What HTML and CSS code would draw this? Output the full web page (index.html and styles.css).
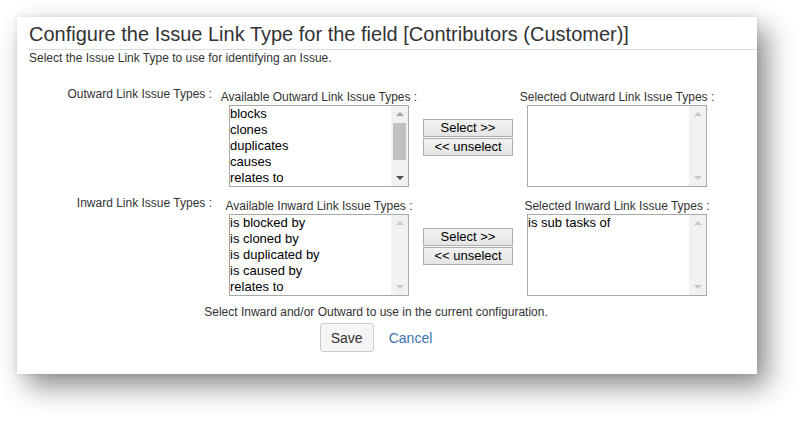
FILE: index.html
```html
<!DOCTYPE html>
<html>
<head>
<meta charset="utf-8">
<link rel="stylesheet" href="styles.css">
</head>
<body>
<div class="card">
  <h1 class="title">Configure the Issue Link Type for the field [Contributors (Customer)]</h1>
  <p class="intro">Select the Issue Link Type to use for identifying an Issue.</p>
  <div class="form">
    <div class="row">
      <div class="row-label">Outward Link Issue Types :</div>
      <div class="col">
        <div class="col-label">Available Outward Link Issue Types :</div>
        <div class="listbox">
          <div class="items">
            <div>blocks</div><div>clones</div><div>duplicates</div><div>causes</div><div>relates to</div>
          </div>
          <div class="sb active">
            <span class="arr up"></span>
            <span class="track"><span class="thumb"></span></span>
            <span class="arr down"></span>
          </div>
        </div>
      </div>
      <div class="btns">
        <button class="mv">Select &gt;&gt;</button>
        <button class="mv">&lt;&lt; unselect</button>
      </div>
      <div class="col">
        <div class="col-label">Selected Outward Link Issue Types :</div>
        <div class="listbox">
          <div class="items"></div>
          <div class="sb">
            <span class="arr up"></span>
            <span class="track"></span>
            <span class="arr down"></span>
          </div>
        </div>
      </div>
    </div>
    <div class="row">
      <div class="row-label">Inward Link Issue Types :</div>
      <div class="col">
        <div class="col-label">Available Inward Link Issue Types :</div>
        <div class="listbox">
          <div class="items">
            <div>is blocked by</div><div>is cloned by</div><div>is duplicated by</div><div>is caused by</div><div>relates to</div>
          </div>
          <div class="sb">
            <span class="arr up"></span>
            <span class="track"></span>
            <span class="arr down"></span>
          </div>
        </div>
      </div>
      <div class="btns">
        <button class="mv">Select &gt;&gt;</button>
        <button class="mv">&lt;&lt; unselect</button>
      </div>
      <div class="col">
        <div class="col-label">Selected Inward Link Issue Types :</div>
        <div class="listbox">
          <div class="items"><div>is sub tasks of</div></div>
          <div class="sb">
            <span class="arr up"></span>
            <span class="track"></span>
            <span class="arr down"></span>
          </div>
        </div>
      </div>
    </div>
    <p class="note">Select Inward and/or Outward to use in the current configuration.</p>
    <div class="actions">
      <button class="save">Save</button>
      <a class="cancel" href="#">Cancel</a>
    </div>
  </div>
</div>
</body>
</html>
```
FILE: styles.css
```css
html, body {
  margin: 0;
  padding: 0;
  background: #fff;
}
body {
  font-family: "Liberation Sans", Arial, sans-serif;
  color: #333;
  width: 805px;
  height: 423px;
  overflow: hidden;
}
.card {
  margin: 17px 0 0 17px;
  width: 728px;
  height: 357px;
  padding-left: 12px;
  background: #fff;
  box-shadow: 0 0 5px rgba(0,0,0,0.10), 10px 12px 26px rgba(0,0,0,0.46);
}
.title {
  margin: 0;
  padding-top: 5px;
  height: 27px;
  font-size: 20px;
  font-weight: normal;
  line-height: 24px;
  color: #333;
  border-bottom: 1px solid #dcdcdc;
}
.intro {
  margin: 0;
  padding-top: 1px;
  font-size: 12px;
  line-height: 15px;
  color: #333;
}
.form {
  width: 694px;
  padding-top: 21px;
}
.row {
  display: flex;
  align-items: flex-start;
  margin-bottom: 9px;
}
.row-label {
  width: 183px;
  text-align: right;
  font-size: 12px;
  line-height: 15px;
  color: #333;
  margin-right: 7px;
}
.col {
  width: 200px;
  display: flex;
  flex-direction: column;
  align-items: center;
}
.col-label {
  margin-top: 2px;
  font-size: 12px;
  line-height: 16px;
  color: #333;
  white-space: nowrap;
}
.listbox {
  width: 178px;
  height: 80px;
  border: 1px solid #a9a9a9;
  display: flex;
  background: #fff;
}
.items {
  flex: 1;
  font-size: 13px;
  line-height: 16px;
  color: #000;
  white-space: nowrap;
  overflow: hidden;
}
.sb {
  width: 17px;
  background: #f1f1f1;
  display: flex;
  flex-direction: column;
  align-items: center;
}
.arr {
  width: 0;
  height: 0;
  border-left: 4px solid transparent;
  border-right: 4px solid transparent;
  margin: 6px 0;
}
.arr.up { border-bottom: 4px solid #c8c8c8; }
.arr.down { border-top: 4px solid #c8c8c8; }
.sb.active .arr.up { border-bottom-color: #a3a3a3; }
.sb.active .arr.down { border-top-color: #505050; }
.track {
  flex: 1;
  width: 100%;
  display: flex;
  justify-content: center;
}
.thumb {
  width: 13px;
  height: 37px;
  margin-top: 1px;
  background: #c1c1c1;
}
.btns {
  width: 90px;
  margin: 32px 4px 0;
  display: flex;
  flex-direction: column;
  gap: 1px;
}
.mv {
  width: 90px;
  height: 18px;
  padding: 0;
  margin: 0;
  font-family: "Liberation Sans", Arial, sans-serif;
  font-size: 13px;
  line-height: 16px;
  color: #000;
  border: 1px solid #acacac;
  border-radius: 0;
  background: linear-gradient(#f2f2f2, #e4e4e4);
}
.note {
  margin: 8px 0 0;
  text-align: center;
  font-size: 12px;
  line-height: 15px;
  color: #333;
}
.actions {
  margin-top: 3px;
  display: flex;
  justify-content: center;
  align-items: center;
  gap: 15px;
}
.save {
  width: 54px;
  height: 29px;
  padding: 0;
  font-family: "Liberation Sans", Arial, sans-serif;
  font-size: 14px;
  color: #333;
  background: #f5f5f5;
  border: 1px solid #ccc;
  border-radius: 3px;
}
.cancel {
  font-size: 14px;
  color: #3b73af;
  text-decoration: none;
}
```
